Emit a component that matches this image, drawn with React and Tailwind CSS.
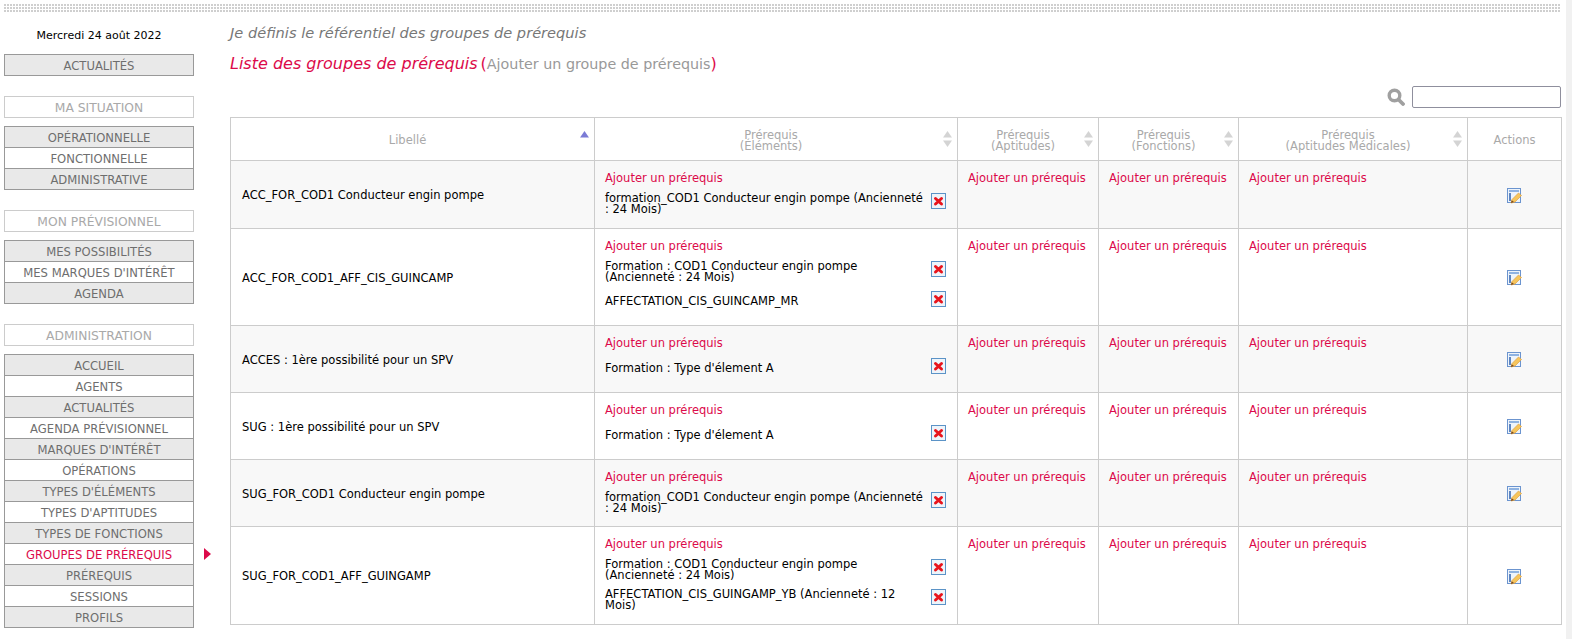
const font = "font-['Verdana','DejaVu_Sans',sans-serif]";

const menuSections = [
  { items: [{ label: "ACTUALITÉS" }] },
  {
    title: "MA SITUATION",
    items: [{ label: "OPÉRATIONNELLE" }, { label: "FONCTIONNELLE" }, { label: "ADMINISTRATIVE" }],
  },
  {
    title: "MON PRÉVISIONNEL",
    items: [{ label: "MES POSSIBILITÉS" }, { label: "MES MARQUES D'INTÉRÊT" }, { label: "AGENDA" }],
  },
  {
    title: "ADMINISTRATION",
    items: [
      { label: "ACCUEIL" },
      { label: "AGENTS" },
      { label: "ACTUALITÉS" },
      { label: "AGENDA PRÉVISIONNEL" },
      { label: "MARQUES D'INTÉRÊT" },
      { label: "OPÉRATIONS" },
      { label: "TYPES D'ÉLÉMENTS" },
      { label: "TYPES D'APTITUDES" },
      { label: "TYPES DE FONCTIONS" },
      { label: "GROUPES DE PRÉREQUIS", active: true },
      { label: "PRÉREQUIS" },
      { label: "SESSIONS" },
      { label: "PROFILS" },
    ],
  },
];

const rows = [
  {
    label: "ACC_FOR_COD1 Conducteur engin pompe",
    h: "h-[68px]",
    items: ["formation_COD1 Conducteur engin pompe (Ancienneté : 24 Mois)"],
  },
  {
    label: "ACC_FOR_COD1_AFF_CIS_GUINCAMP",
    h: "h-[97px]",
    items: ["Formation : COD1 Conducteur engin pompe (Ancienneté : 24 Mois)", "AFFECTATION_CIS_GUINCAMP_MR"],
  },
  {
    label: "ACCES : 1ère possibilité pour un SPV",
    h: "h-[67px]",
    items: ["Formation : Type d'élement A"],
  },
  {
    label: "SUG : 1ère possibilité pour un SPV",
    h: "h-[67px]",
    items: ["Formation : Type d'élement A"],
  },
  {
    label: "SUG_FOR_COD1 Conducteur engin pompe",
    h: "h-[67px]",
    items: ["formation_COD1 Conducteur engin pompe (Ancienneté : 24 Mois)"],
  },
  {
    label: "SUG_FOR_COD1_AFF_GUINGAMP",
    h: "h-[98px]",
    items: ["Formation : COD1 Conducteur engin pompe (Ancienneté : 24 Mois)", "AFFECTATION_CIS_GUINGAMP_YB (Ancienneté : 12 Mois)"],
  },
];

const columns = [
  { w: "w-[364px]", lines: ["Libellé"], sorted: true },
  { w: "w-[363px]", lines: ["Prérequis", "(Éléments)"] },
  { w: "w-[141px]", lines: ["Prérequis", "(Aptitudes)"] },
  { w: "w-[140px]", lines: ["Prérequis", "(Fonctions)"] },
  { w: "w-[229px]", lines: ["Prérequis", "(Aptitudes Médicales)"] },
  { w: "w-[94px]", lines: ["Actions"], noSort: true },
];

function SortArrows({ sorted }) {
  return (
    <svg width="9" height="16" viewBox="0 0 9 16" className="absolute right-[5px] top-[13px]">
      <path d="M4.5 0 9 6.5H0z" fill={sorted ? "#7b7bd6" : "#d4d4d4"} />
      {!sorted && <path d="M4.5 16 0 9.5h9z" fill="#d4d4d4" />}
    </svg>
  );
}

function DeleteIcon() {
  return (
    <svg width="15" height="16" viewBox="0 0 15 16" className="shrink-0">
      <rect x="0.5" y="0.5" width="14" height="15" fill="#eef4fa" stroke="#5b93c7" />
      <path d="M4.500 5.500l6 5.500M10.500 5.500l-6 5.500" stroke="#e8141c" strokeWidth="3" strokeLinecap="round" />
    </svg>
  );
}

function EditIcon() {
  return (
    <svg width="16" height="16" viewBox="0 0 16 16">
      <rect x="0.5" y="0.5" width="13" height="14" fill="#eef4fb" stroke="#6b94cf" />
      <rect x="2" y="2" width="10" height="2" fill="#8fb3e2" />
      <rect x="2" y="5" width="2" height="8" fill="#5f86c0" />
      <path d="M4 15l1-3.500 6.500-6.500 3 2.500-6.500 6.500z" fill="#f6c55c" stroke="#e0a040" strokeWidth="0.7" />
      <path d="M4 15l.7-2.800 2.300 1.700z" fill="#7a4a20" />
    </svg>
  );
}

function SearchIcon() {
  return (
    <svg width="18" height="18" viewBox="0 0 18 18">
      <circle cx="7.500" cy="7.500" r="5.300" fill="none" stroke="#a0a0a0" strokeWidth="3.400" />
      <path d="M11.500 11.500 16 16" stroke="#a0a0a0" strokeWidth="3.800" strokeLinecap="round" />
    </svg>
  );
}

function AddLink() {
  return <div className="text-[#dc0a4a] leading-[13px]">Ajouter un prérequis</div>;
}

function Sidebar() {
  return (
    <aside className="w-[190px] shrink-0">
      <div className="h-[41px] pt-[16px] text-center text-[11px] leading-[14px] text-black">Mercredi 24 août 2022</div>
      {menuSections.map((section, i) => (
        <div key={i} className="mb-[20px]">
          {section.title && (
            <div className="mb-[8px] flex h-[22px] items-center justify-center border border-[#cccccc] pt-[3px] text-[12.300px] text-[#a9a9a9]">
              {section.title}
            </div>
          )}
          <div className="border border-[#999999]">
            {section.items.map((item, j) => (
              <div
                key={item.label}
                className={`relative flex h-[20px] items-center justify-center pt-[3px] text-[11.600px] ${j > 0 ? "mt-px" : ""} ${
                  j % 2 === 0 ? "bg-[#e9e9e9]" : "bg-white"
                } ${item.active ? "text-[#dc0a4a]" : "text-[#6e6e6e]"}`}
              >
                {item.label}
                {j > 0 && <div className="absolute inset-x-0 -top-px h-px bg-[#999999]" />}
                {item.active && (
                  <svg width="7" height="12" viewBox="0 0 7 12" className="absolute -right-[18px] top-[4px]">
                    <path d="M0 0l7 6-7 6z" fill="#dc0a4a" />
                  </svg>
                )}
              </div>
            ))}
          </div>
        </div>
      ))}
    </aside>
  );
}

function PrereqTable() {
  return (
    <table className="w-[1331px] table-fixed border-collapse border border-[#cccccc] text-[11.500px] leading-[11px] text-black">
      <thead>
        <tr className="h-[43px]">
          {columns.map((col) => (
            <th
              key={col.lines[0] + col.w}
              className={`${col.w} relative border border-[#cccccc] p-0 pt-[3px] text-center font-normal text-[#a9a9a9] ${col.noSort ? "" : "pr-[10px]"}`}
            >
              {col.lines.map((line) => (
                <div key={line} className="leading-[11px]">{line}</div>
              ))}
              {!col.noSort && <SortArrows sorted={col.sorted} />}
            </th>
          ))}
        </tr>
      </thead>
      <tbody>
        {rows.map((row, i) => (
          <tr key={row.label} className={`${row.h} ${i % 2 === 0 ? "bg-[#f8f8f8]" : "bg-white"}`}>
            <td className="border border-[#cccccc] px-[11px] pt-[2px] align-middle">{row.label}</td>
            <td className="border border-[#cccccc] pl-[10px] pr-[11px] pt-[11px] align-top">
              <AddLink />
              <div className="mt-px flex flex-col">
                {row.items.map((item) => (
                  <div key={item} className="flex h-[30px] items-center justify-between gap-[8px]">
                    <div className="w-[318px] pt-[5px]">{item}</div>
                    <DeleteIcon />
                  </div>
                ))}
              </div>
            </td>
            {[0, 1, 2].map((n) => (
              <td key={n} className="border border-[#cccccc] px-[10px] pt-[11px] align-top">
                <AddLink />
              </td>
            ))}
            <td className="border border-[#cccccc] pt-[2px] text-center align-middle">
              <div className="flex justify-center"><EditIcon /></div>
            </td>
          </tr>
        ))}
      </tbody>
    </table>
  );
}

export default function App() {
  return (
    <div className={`${font} relative h-[639px] w-[1572px] overflow-hidden bg-white`}>
      <div className="absolute inset-y-0 right-0 w-[6px] bg-[#f1f1f1]" />
      <div className="ml-[4px] mr-[11px] mt-[4px] h-[9px] bg-[#cfcfcf] bg-[linear-gradient(to_right,transparent_2px,#ffffff_2px),linear-gradient(to_bottom,transparent_2px,#ffffff_2px)] bg-[length:3px_3px]" />
      <div className="ml-[4px] flex gap-[36px]">
        <Sidebar />
        <main className="w-[1331px]">
          <h2 className="mt-[10px] text-[14.600px] leading-[20px] font-normal italic text-[#777777]">
            Je définis le référentiel des groupes de prérequis
          </h2>
          <div className="mt-[10px] flex items-baseline text-[16px] leading-[22px]">
            <span className="italic text-[#dc0a4a]">Liste des groupes de prérequis</span>
            <span className="ml-[3px] text-[#dc0a4a]">(</span>
            <span className="text-[14.300px] text-[#999999]">Ajouter un groupe de prérequis</span>
            <span className="text-[#dc0a4a]">)</span>
          </div>
          <div className="mt-[11px] mb-[9px] flex h-[22px] items-center justify-end gap-[7px]">
            <SearchIcon />
            <input className="h-[22px] w-[149px] rounded-[2px] border border-[#8f8f9d] bg-white" />
          </div>
          <PrereqTable />
          <div className="ml-[1260px] mt-[14px] h-[10px] w-[34px] border-t border-[#999999] bg-[#e9e9e9]" />
        </main>
      </div>
    </div>
  );
}
